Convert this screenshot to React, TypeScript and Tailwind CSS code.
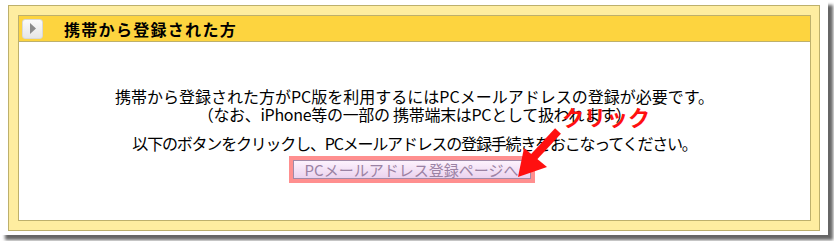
import React from "react";

const jp = { fontFamily: '"Noto Sans CJK JP", "Noto Sans", sans-serif' };

export default function App() {
  return (
    <div className="relative w-[834px] h-[241px] bg-white overflow-hidden" style={jp}>
      <div className="w-[828px] h-[235px] bg-white shadow-[5px_5px_3px_rgba(0,0,0,0.6)] pl-[8px] pt-[5px]">
        <div className="w-[812px] h-[226px] border border-[#bdb06c] bg-[#feeda0] p-[9px] pr-[8px]">
          <div className="w-[793px] h-[206px] border border-[#bdb06c] bg-white flex flex-col">
            <div className="h-[26px] bg-[#fdd43f] border-b border-[#bdb06c] flex items-center pl-[3px]">
              <div className="w-[21px] h-[20px] rounded-[3px] bg-gradient-to-b from-[#fafafa] to-[#e6e6e6] border border-[#d8d8d8] flex items-center justify-center">
                <svg width="8" height="11" viewBox="0 0 8 11">
                  <polygon points="1,0 7,5.5 1,11" fill="#8a8a8a" />
                </svg>
              </div>
              <span className="ml-[21px] text-[16px] font-bold text-black tracking-[1.3px] leading-none">携帯から登録された方</span>
            </div>
            <div className="flex flex-col items-center pt-[45px] text-[16px] text-black">
              <p className="leading-[18px] text-center">
                携帯から登録された方がPC版を利用するにはPCメールアドレスの登録が必要です。
              </p>
              <p className="leading-[18px] text-center tracking-[-0.3px]">
                （なお、iPhone等の一部の 携帯端末はPCとして扱われます）
              </p>
              <p className="leading-[18px] text-center mt-[11px] tracking-[-1.2px]">
                以下のボタンをクリックし、PCメールアドレスの登録手続きをおこなってください。
              </p>
              <div className="mt-[4px] border-[4px] border-[#ff8f8f] ml-[-6px]">
                <div className="w-[238px] h-[19px] border border-[#a08aa8] bg-gradient-to-b from-[#fdf2fd] to-[#ebd3ef] flex items-center justify-center text-[15px] text-[#9b82a4] leading-none">
                  PCメールアドレス登録ページへ
                </div>
              </div>
            </div>
          </div>
        </div>
      </div>
      <svg className="absolute left-0 top-0" width="834" height="241" viewBox="0 0 834 241">
        <line x1="558" y1="131" x2="532" y2="159" stroke="#ff1010" strokeWidth="8" />
        <polygon points="518,177 524,148 547,167" fill="#ff1010" />
      </svg>
      <div className="absolute left-[562px] top-[105px] text-[22px] font-bold text-[#ff1010] leading-none">
        クリック
      </div>
    </div>
  );
}
